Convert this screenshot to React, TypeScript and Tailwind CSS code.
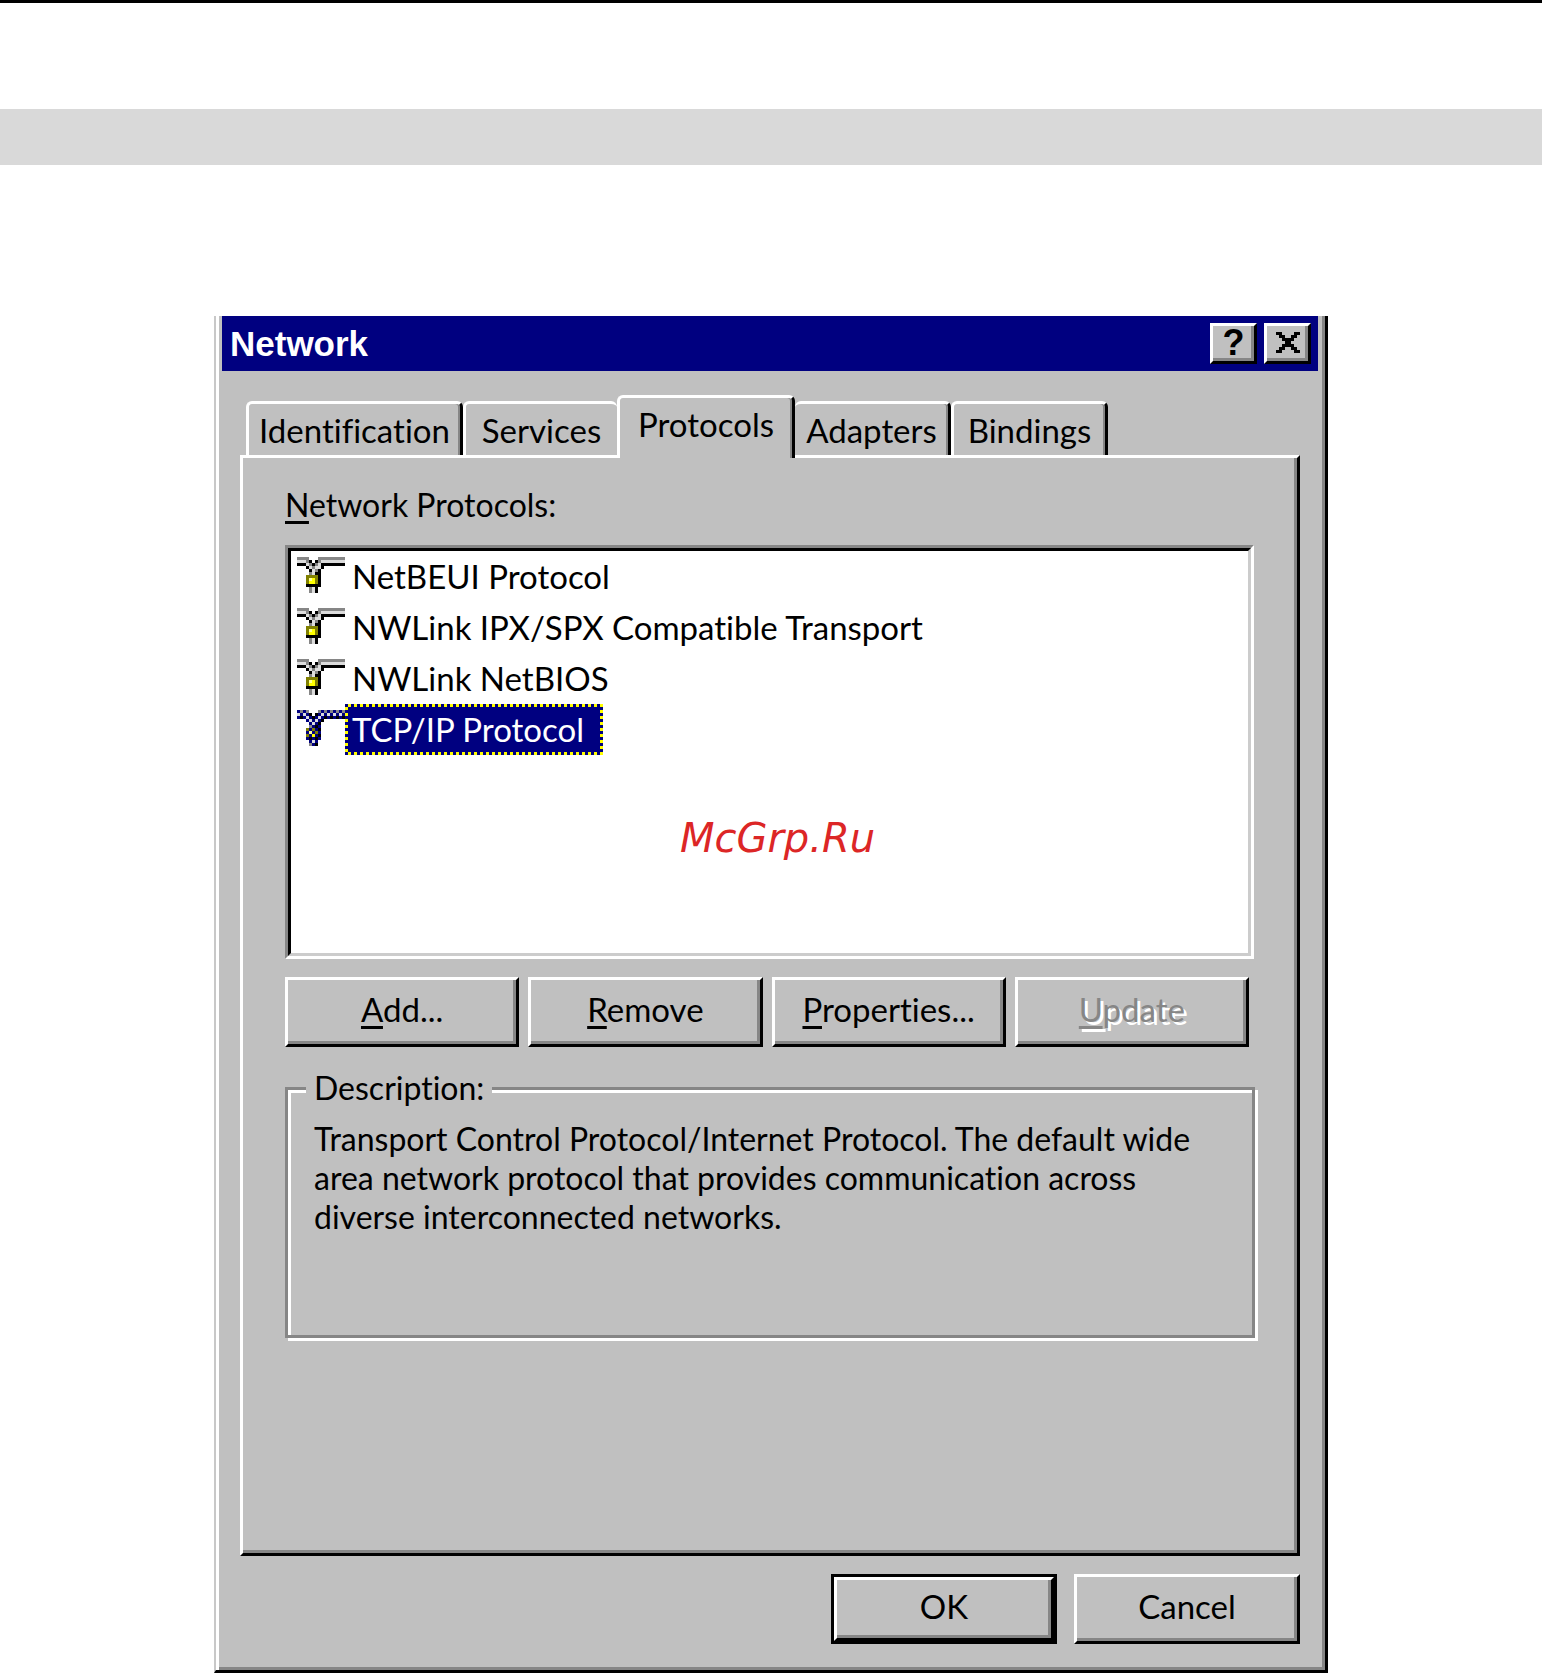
import React, { useState } from "react";
import clsx from "clsx";

const TABS = [
  { name: "Identification", width: "w-[217px]" },
  { name: "Services", width: "w-[154px]" },
  { name: "Protocols", width: "w-[178px]" },
  { name: "Adapters", width: "w-[156px]" },
  { name: "Bindings", width: "w-[157px]" },
];

const PROTOCOLS = [
  "NetBEUI Protocol",
  "NWLink IPX/SPX Compatible Transport",
  "NWLink NetBIOS",
  "TCP/IP Protocol",
];

// One character per pixel, see PIXEL_COLORS
const CABLE_PIXELS = [
  "GGGG...GGGGGGGGG",
  "LLLGK.KGLLLLLLLL",
  "KKKLGKGLKKKKKKKK",
  "...KLGLLK.......",
  "....KLGK........",
  "....GLKK........",
  "...OOOOK........",
  "...OWYOK........",
  "...OYYOK........",
  "...KKKKK........",
  "....GLK.........",
  "....GLK.........",
];

const CLOSE_PIXELS = [
  "KK....KK",
  ".KK..KK.",
  "..KKKK..",
  "...KK...",
  "..KKKK..",
  ".KK..KK.",
  "KK....KK",
];

const PIXEL_COLORS: Record<string, string> = {
  K: "#000000",
  G: "#868686",
  L: "#dcdcdc",
  O: "#808000",
  Y: "#ffff00",
  W: "#ffff99",
};

interface PixelIconProps {
  rows: string[];
  className: string;
  dithered?: boolean;
}

function PixelIcon({ rows, className, dithered }: PixelIconProps) {
  return (
    <svg
      viewBox={`0 0 ${rows[0].length} ${rows.length}`}
      className={className}
      shapeRendering="crispEdges"
      aria-hidden="true"
    >
      {rows.flatMap((row, y) =>
        row.split("").map((c, x) => {
          if (c === ".") return null;
          const fill = dithered && (x + y) % 2 === 0 ? "#000080" : PIXEL_COLORS[c];
          return <rect key={`${x}-${y}`} x={x} y={y} width={1} height={1} fill={fill} />;
        })
      )}
    </svg>
  );
}

const BEVEL =
  "border-[3px] border-t-white border-l-white border-r-black border-b-black shadow-[inset_-3px_-3px_0_#868686]";

interface PushButtonProps {
  label: string;
  accessKey?: boolean;
  disabled?: boolean;
}

function PushButton({ label, accessKey, disabled }: PushButtonProps) {
  return (
    <button
      type="button"
      disabled={disabled}
      className={clsx(
        "h-[70px] min-w-0 flex-1 bg-[#c0c0c0] pb-[6px]",
        BEVEL,
        disabled && "text-[#868686] [text-shadow:3px_3px_0_#fff]"
      )}
    >
      {accessKey ? (
        <>
          <u className="decoration-[3px] underline-offset-[4px] [text-decoration-skip-ink:none]">{label[0]}</u>
          {label.slice(1)}
        </>
      ) : (
        label
      )}
    </button>
  );
}

function TitleBar() {
  return (
    <div className="ml-[6px] mr-[7px] flex h-[55px] items-center bg-[#000080] pl-2 pr-[7px]">
      <h1 className="flex-1 text-[35px] font-bold leading-none text-white [font-family:'Liberation_Sans',sans-serif]">
        Network
      </h1>
      <div className="flex gap-[7px]">
        <button
          type="button"
          aria-label="Help"
          className={clsx(
            "flex h-[41px] w-[47px] items-center justify-center bg-[#c0c0c0] pb-[2px] text-[36px] font-bold leading-none [font-family:'Liberation_Sans',sans-serif]",
            BEVEL
          )}
        >
          ?
        </button>
        <button
          type="button"
          aria-label="Close"
          className={clsx("flex h-[41px] w-[47px] items-center justify-center bg-[#c0c0c0] pb-[2px]", BEVEL)}
        >
          <PixelIcon rows={CLOSE_PIXELS} className="h-[21px] w-6" />
        </button>
      </div>
    </div>
  );
}

export default function App() {
  const [tab, setTab] = useState("Protocols");
  const [selected, setSelected] = useState("TCP/IP Protocol");
  const activeIndex = TABS.findIndex((t) => t.name === tab);

  return (
    <div className="min-h-screen bg-white text-[33px] leading-[40px] text-black [font-family:Lato,sans-serif] [font-variant-ligatures:none]">
      <div className="h-[3px] bg-black" />
      <div className="mt-[106px] h-14 bg-[#d9d9d9]" />

      <main className="mx-auto mt-[151px] w-full max-w-[1114px] border-b-[3px] border-l-2 border-r-[3px] border-b-black border-l-[#c8c8c8] border-r-black bg-[#c0c0c0] shadow-[inset_3px_0_0_#fff,inset_-3px_-3px_0_#868686]">
        <TitleBar />

        <div className="pb-[26px] pl-6 pr-[25px] pt-6">
          <div role="tablist" className="ml-[6px] flex items-end">
            {TABS.map(({ name, width }, i) => {
              const active = name === tab;
              return (
                <button
                  key={name}
                  type="button"
                  role="tab"
                  aria-selected={active}
                  onClick={() => setTab(name)}
                  className={clsx(
                    "rounded-t-[6px] border-t-[3px] border-t-white bg-[#c0c0c0]",
                    width,
                    active ? "relative -mb-[3px] h-[63px] pb-2" : "h-[54px]",
                    i !== activeIndex + 1 && "border-l-[3px] border-l-white",
                    i !== activeIndex - 1 && "border-r-[3px] border-r-black shadow-[inset_-2px_0_0_#868686]"
                  )}
                >
                  {name}
                </button>
              );
            })}
          </div>

          <section
            role="tabpanel"
            className={clsx("pb-[215px] pl-[42px] pr-[43px] pt-[27px]", BEVEL)}
          >
            <h2 id="protocols-label" className="mb-5 text-[32px] leading-[40px]">
              <u className="decoration-[3px] underline-offset-[4px] [text-decoration-skip-ink:none]">N</u>
              etwork Protocols:
            </h2>

            <div className="border-[3px] border-b-white border-l-[#868686] border-r-white border-t-[#868686]">
              <ul
                role="listbox"
                aria-labelledby="protocols-label"
                className="relative min-h-[408px] border-[3px] border-b-[#cccccc] border-l-black border-r-[#cccccc] border-t-black bg-white"
              >
                {PROTOCOLS.map((name) => {
                  const isSelected = name === selected;
                  return (
                    <li
                      key={name}
                      role="option"
                      aria-selected={isSelected}
                      onClick={() => setSelected(name)}
                      className="flex h-[51px] items-start pl-[6px]"
                    >
                      <PixelIcon
                        rows={CABLE_PIXELS}
                        dithered={isSelected}
                        className="mt-[6px] h-9 w-12 shrink-0"
                      />
                      {/* Checkerboard behind the label shows through as the dotted focus ring */}
                      <span
                        className={clsx(
                          "p-[3px]",
                          isSelected &&
                            "bg-[repeating-conic-gradient(#ffff00_0_25%,#000080_0_50%)] bg-[length:6px_6px]"
                        )}
                      >
                        <span
                          className={clsx(
                            "block pl-1 pr-4 leading-[45px]",
                            isSelected && "bg-[#000080] text-white"
                          )}
                        >
                          {name}
                        </span>
                      </span>
                    </li>
                  );
                })}
                <li
                  role="presentation"
                  className="absolute inset-x-0 top-[263px] pl-4 text-center text-[40px] italic leading-[48px] text-[#dc2626] [font-family:'DejaVu_Sans',sans-serif]"
                >
                  McGrp.Ru
                </li>
              </ul>
            </div>

            <div className="mr-[5px] mt-[18px] flex gap-[9px]">
              <PushButton label="Add..." accessKey />
              <PushButton label="Remove" accessKey />
              <PushButton label="Properties..." accessKey />
              <PushButton label="Update" accessKey disabled />
            </div>

            <fieldset className="-mr-px mt-[21px] border-[3px] border-[#868686] pb-[99px] pl-[26px] pr-10 text-[32px] shadow-[inset_3px_3px_0_#fff,3px_3px_0_#fff]">
              <legend className="-ml-2 bg-[#c0c0c0] px-2 leading-[40px]">Description:</legend>
              <p className="pt-[11px] leading-[39px]">
                Transport Control Protocol/Internet Protocol. The default wide area network protocol
                that provides communication across diverse interconnected networks.
              </p>
            </fieldset>
          </section>

          <div className="ml-auto mt-[18px] flex max-w-[469px] gap-[17px]">
            {/* Default button gets an extra black frame around the bevel */}
            <div className="flex h-[70px] min-w-0 flex-1 border-[3px] border-black">
              <button
                type="button"
                className={clsx("flex-1 bg-[#c0c0c0] pb-[6px]", BEVEL)}
              >
                OK
              </button>
            </div>
            <PushButton label="Cancel" />
          </div>
        </div>
      </main>
    </div>
  );
}
